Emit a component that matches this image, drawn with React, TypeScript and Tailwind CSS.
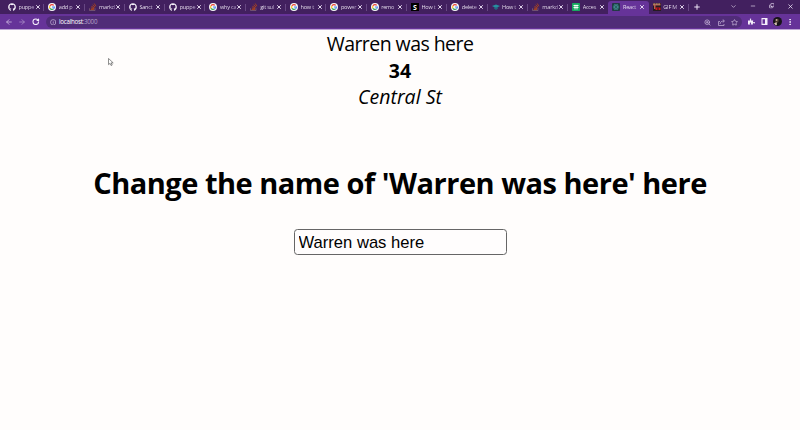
import React from "react";
import { ArrowLeft, ArrowRight, RotateCw, Info, X, Plus, ChevronDown, Minus, Copy, ZoomIn, Star, MoreVertical } from "lucide-react";
import { FaGithub, FaPuzzlePiece } from "react-icons/fa";

type Icon = "github" | "google" | "stack" | "s" | "cap" | "sheet" | "react" | "gif";

const tabs: { icon: Icon; title: string }[] = [
  { icon: "github", title: "puppe" },
  { icon: "google", title: "add p" },
  { icon: "stack", title: "markd" },
  { icon: "github", title: "Sanct" },
  { icon: "github", title: "puppe" },
  { icon: "google", title: "why ca" },
  { icon: "stack", title: "git sul" },
  { icon: "google", title: "how t" },
  { icon: "google", title: "power" },
  { icon: "google", title: "remo" },
  { icon: "s", title: "How t" },
  { icon: "google", title: "delete" },
  { icon: "cap", title: "How t" },
  { icon: "stack", title: "markd" },
  { icon: "sheet", title: "Acces" },
  { icon: "react", title: "React" },
  { icon: "gif", title: "GIF M" },
];

function Favicon({ icon }: { icon: Icon }) {
  switch (icon) {
    case "github":
      return <FaGithub className="size-[8px] shrink-0 text-[#f5f0fa]" />;
    case "google":
      return (
        <svg viewBox="0 0 16 16" className="size-[8px] shrink-0">
          <circle cx="8" cy="8" r="8" fill="#f6f4f8" />
          <g fill="none" strokeWidth="2.2">
            <path d="M11.5 4.7A4.8 4.8 0 0 0 3.8 5.8" stroke="#ea4335" />
            <path d="M3.8 5.8A4.8 4.8 0 0 0 3.8 10.3" stroke="#fbbc05" />
            <path d="M3.8 10.3A4.8 4.8 0 0 0 11 11.7" stroke="#34a853" />
            <path d="M11 11.7A4.8 4.8 0 0 0 12.8 8H8" stroke="#4285f4" />
          </g>
        </svg>
      );
    case "stack":
      return (
        <svg viewBox="0 0 16 16" className="size-[8px] shrink-0" fill="none">
          <path d="M1 10.5V15h11v-4.5" stroke="#8a6a78" strokeWidth="1.3" />
          <path d="M3.5 12.8h6.5M3.7 10l6.6 1M5 6.8l6 3M7.3 3.6l5 4.5M10.4 1l3.4 5.5" stroke="#a8431f" strokeWidth="2" />
        </svg>
      );
    case "s":
      return (
        <span className="flex size-[8px] shrink-0 items-center justify-center bg-black font-['Open_Sans',sans-serif] text-[7px] leading-none font-bold text-white">S</span>
      );
    case "cap":
      return (
        <svg viewBox="0 0 16 16" className="size-[8px] shrink-0">
          <path d="M0 6 8 3l8 3-8 4z" fill="#268fa0" />
          <path d="M4 8v3l4 3 4-3V8l-4 2z" fill="#26647f" />
        </svg>
      );
    case "sheet":
      return (
        <svg viewBox="0 0 16 16" className="size-[8px] shrink-0">
          <rect width="16" height="16" rx="1.5" fill="#16a860" />
          <path d="M3 5h10M3 9h10M6 3.500v9.500M10 3.500v9.500" stroke="#fff" strokeWidth="1.8" />
        </svg>
      );
    case "react":
      return (
        <svg viewBox="0 0 16 16" className="size-[8px] shrink-0">
          <rect width="16" height="16" rx="2" fill="#213a45" />
          <g fill="none" stroke="#459c9c" strokeWidth="1.1">
            <ellipse cx="8" cy="8" rx="6" ry="2.4" />
            <ellipse cx="8" cy="8" rx="6" ry="2.4" transform="rotate(60 8 8)" />
            <ellipse cx="8" cy="8" rx="6" ry="2.4" transform="rotate(120 8 8)" />
          </g>
        </svg>
      );
    case "gif":
      return (
        <svg viewBox="0 0 16 16" className="size-[8px] shrink-0">
          <rect width="16" height="16" fill="#251b21" />
          <path d="M0 1h15v4H5v7H2V5H0z" fill="#b96050" />
          <path d="M5 9h3v5H5zM9 8h2v6H9zM12 9h3v5h-3z" fill="#c8171d" />
          <path d="M1 2h3M6 2h3M11 2h3" stroke="#9aba93" strokeWidth="1.5" />
        </svg>
      );
  }
}

function Tab({ icon, title, active, separator }: { icon: Icon; title: string; active: boolean; separator: boolean }) {
  return (
    <div className={`relative flex h-[13px] w-[40.3px] shrink-0 items-center rounded-t-[3px] pb-px pl-[4px] ${active ? "bg-[#663399]" : ""}`}>
      <Favicon icon={icon} />
      <span className="ml-[2.5px] w-[16px] bg-linear-to-r from-[#f6f0fb] from-60% to-[#a58dbb] bg-clip-text font-['Open_Sans',sans-serif] text-[5.6px] leading-[9px] tracking-[-0.25px] whitespace-nowrap text-transparent">
        {title}
      </span>
      <X className="size-[6px] shrink-0 text-[#f0e8f8]" strokeWidth={3.6} />
      {separator && <span className="absolute top-[3px] right-0 h-[7px] w-px bg-[#674783]" />}
    </div>
  );
}

export default function App() {
  return (
    <div className="relative h-[430px] w-[800px] overflow-hidden bg-[#fffdfc] text-black">
      <header>
        <div className="flex h-[14px] items-end bg-[#42205f] pl-[4px]">
          {tabs.map((t, i) => (
            <Tab key={i} icon={t.icon} title={t.title} active={i === 15} separator={i < 14 || i === 16} />
          ))}
          <div className="flex h-[14px] flex-1 items-center text-[#eee4f7]">
            <Plus className="ml-[4px] size-[8px]" strokeWidth={3} />
            <div className="ml-auto flex w-[70px] items-center justify-between pr-[6px] pb-[2px]">
              <ChevronDown className="size-[7px]" strokeWidth={2} />
              <Minus className="size-[6px]" strokeWidth={2.5} />
              <Copy className="size-[5.5px] -scale-x-100 rotate-180" strokeWidth={2.8} />
              <X className="size-[7px]" strokeWidth={2.6} />
            </div>
          </div>
        </div>
        <div className="flex h-[16px] items-center border-b border-[#bda5d4] bg-[#663399] pl-[5px] text-[#f5effb]">
          <ArrowLeft className="size-[8px] text-[#c9b4dd]" strokeWidth={2.5} />
          <ArrowRight className="ml-[5px] size-[8px] text-[#a88ac6]" strokeWidth={2.5} />
          <RotateCw className="ml-[6px] size-[7.5px]" strokeWidth={3.4} />
          <div className="mt-[1px] ml-[6px] flex h-[12px] w-[696px] items-center rounded-full bg-[#502c78] pr-[3.5px] pl-[4px]">
            <Info className="size-[6.5px] text-[#d7c7e6]" strokeWidth={2.3} />
            <span className="ml-[3px] font-['Open_Sans',sans-serif] text-[6.2px] leading-[10px] tracking-[-0.25px] text-white">
              localhost<span className="text-[#b6a2ca]">:3000</span>
            </span>
            <div className="ml-auto flex items-center gap-[6.5px] text-[#c8b6da]">
              <ZoomIn className="size-[7px]" strokeWidth={2.5} />
              <svg viewBox="0 0 14 14" className="size-[7px]" fill="none" stroke="currentColor" strokeWidth="1.4">
                <path d="M4 5H1v8h11v-3M4 10c.4-4 3-6 8-6M9.500 1l3.500 3-3.500 3" />
              </svg>
              <Star className="size-[7px]" strokeWidth={2.5} />
            </div>
          </div>
          <FaPuzzlePiece className="ml-[6px] size-[7px]" />
          <svg viewBox="0 0 14 14" className="ml-[6px] size-[7px]">
            <path fill="currentColor" fillRule="evenodd" d="M1 0h12v14H1zM3 2.5v9h5v-9z" />
          </svg>
          <svg viewBox="0 0 18 18" className="ml-[5px] size-[9px]">
            <circle cx="9" cy="9" r="9" fill="#17131a" />
            <path d="M7 4c4-2 6 2 4 6l-4 3-3-3z" fill="#4a382f" />
            <path d="M2 13l5-3 1 5-2 2z" fill="#d7c5b5" />
            <circle cx="7" cy="6" r="2" fill="#c4ad99" />
          </svg>
          <MoreVertical className="ml-[4px] size-[8px]" strokeWidth={3} />
        </div>
      </header>

      <main className="flex flex-col items-center pt-[1.3px]">
        <div className="flex flex-col items-center font-['Open_Sans',sans-serif] text-[19.5px] leading-[26.6px] whitespace-nowrap">
          <span className="tracking-[-0.55px]">Warren was here</span>
          <b className="font-bold">34</b>
          <i className="italic">Central St</i>
        </div>
        <h1 className="mt-[51.7px] font-['Open_Sans',sans-serif] text-[29px] leading-[40px] font-bold tracking-[-0.49px] whitespace-nowrap">
          Change the name of 'Warren was here' here
        </h1>
        <input
          type="text"
          defaultValue="Warren was here"
          className="mt-[26.2px] h-[26px] w-[213px] rounded-[3.5px] border border-[#666] bg-[#fffdfd] px-[4px] pt-[2px] font-['Liberation_Sans',Arial,sans-serif] text-[16.6px] leading-[20px] outline-none"
        />
      </main>

      <svg viewBox="0 0 12 18" className="absolute top-[58px] left-[108px] h-[8px] w-[5.5px]">
        <path d="M1 1v14l3.500-3 2.300 5 2.500-1.200L7 11h4.500z" fill="#fff" stroke="#555" strokeWidth="1.5" />
      </svg>
    </div>
  );
}
